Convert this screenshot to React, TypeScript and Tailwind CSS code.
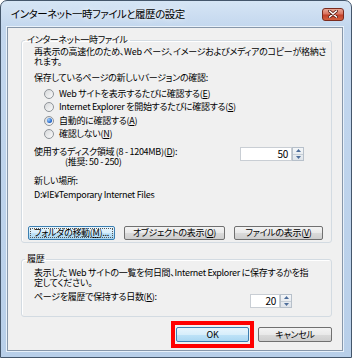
import type { ReactNode } from "react";

const jp = "font-['Noto_Sans_CJK_JP','Noto_Sans',sans-serif] [font-feature-settings:'palt']";

function Radio({ checked, children }: { checked?: boolean; children: ReactNode }) {
  return (
    <div className="flex h-[13.5px] items-center gap-[5px] pl-[22px]">
      <span className="flex h-[10px] w-[10px] items-center justify-center rounded-full border border-[#8f9499] bg-[linear-gradient(135deg,#d6d8da,#fbfbfb)]">
        {checked && (
          <span className="h-[5px] w-[5px] rounded-full bg-[radial-gradient(circle_at_35%_35%,#9fd0ff,#1c5fc6_70%)]" />
        )}
      </span>
      <span className="leading-[10px]">{children}</span>
    </div>
  );
}

function Spinner({ value, width }: { value: string; width: string }) {
  return (
    <div className="flex h-[14px]">
      <div
        className={
          "flex items-center justify-end border border-[#c9ced4] bg-white pr-[3px] text-[10px] leading-[10px] " + width
        }
      >
        {value}
      </div>
      <div className="flex w-[12px] flex-col border border-[#b7c0ca] bg-[linear-gradient(#f4f6f8,#dfe4ea)]">
        <div className="flex flex-1 items-center justify-center border-b border-[#c6ced6]">
          <svg width="5" height="3" viewBox="0 0 5 3">
            <path d="M0 3 L2.5 0 L5 3 Z" fill="#4d6d9a" />
          </svg>
        </div>
        <div className="flex flex-1 items-center justify-center">
          <svg width="5" height="3" viewBox="0 0 5 3">
            <path d="M0 0 L2.5 3 L5 0 Z" fill="#4d6d9a" />
          </svg>
        </div>
      </div>
    </div>
  );
}

function Button({
  children,
  width,
  blue,
  focused,
}: {
  children: ReactNode;
  width: string;
  blue?: boolean;
  focused?: boolean;
}) {
  return (
    <button
      type="button"
      className={
        "relative flex h-[14px] items-center justify-center rounded-[2px] border leading-[10px] text-black " +
        width +
        (blue
          ? " border-[#3c7fb1] bg-[linear-gradient(#e8f5fd_0%,#d7eefb_50%,#bfe3f8_51%,#aad7f2_100%)]"
          : " border-[#707070] bg-[linear-gradient(#f3f3f3_0%,#e9e9e9_50%,#dadada_51%,#cecece_100%)]")
      }
    >
      {focused && <span className="absolute inset-[1px] border border-dotted border-[#555]" />}
      {children}
    </button>
  );
}

export default function App() {
  return (
    <div className={"h-[358px] w-[352px] whitespace-nowrap bg-white text-[9px] tracking-[-0.3px] text-black " + jp}>
      <div className="flex h-full flex-col rounded-t-[7px] border border-[#44566b] bg-[linear-gradient(180deg,#d6e5f5_0px,#c3d7ee_26px,#b8cfe9_100%)]">
        {/* title bar */}
        <div className="flex h-[26px] items-center justify-between pl-[10px] pr-[7px]">
          <span className="text-[10.5px] leading-[12px] tracking-[-0.5px] [text-shadow:0_0_6px_#ffffff]">
            インターネット一時ファイルと履歴の設定
          </span>
          <div className="flex h-[13px] w-[22px] items-center justify-center rounded-[3px] border border-[#7a2a1d] bg-[linear-gradient(#eaa797_0%,#d9735f_45%,#c2402a_55%,#d35f3e_100%)]">
            <svg width="10" height="8" viewBox="0 0 10 8">
              <path d="M1.5 1 L8.5 7 M8.5 1 L1.5 7" stroke="#5a1a10" strokeWidth="3" strokeLinecap="round" />
              <path d="M1.5 1 L8.5 7 M8.5 1 L1.5 7" stroke="#ffffff" strokeWidth="1.6" strokeLinecap="round" />
            </svg>
          </div>
        </div>

        {/* client area */}
        <div className="mb-[6px] ml-[6px] mr-[8px] flex flex-1 flex-col border border-[#8797aa] bg-[#f0f0f0] pl-[13px] pr-[10px] shadow-[0_0_0_1px_#e8f1fa]">
          <fieldset className="mt-[7px] rounded-[3px] border border-[#d3dbe2] pb-[2px] shadow-[inset_1px_1px_0_#ffffff]">
            <legend className="ml-[3px] px-[2px] leading-[10px]">インターネット一時ファイル</legend>
            <p className="mt-[2px] pl-[12px] leading-[10px]">
              再表示の高速化のため、Web ページ、イメージおよびメディアのコピーが格納さ
              <br />
              れます。
            </p>
            <p className="mt-[6px] pl-[12px] leading-[10px]">保存しているページの新しいバージョンの確認:</p>
            <div className="mt-[4px]">
              <Radio>
                Web サイトを表示するたびに確認する(<u>E</u>)
              </Radio>
              <Radio>
                Internet Explorer を開始するたびに確認する(<u>S</u>)
              </Radio>
              <Radio checked>
                自動的に確認する(<u>A</u>)
              </Radio>
              <Radio>
                確認しない(<u>N</u>)
              </Radio>
            </div>
            <div className="mt-[6px] flex items-start justify-between pl-[12px] pr-[27px]">
              <p className="leading-[10px]">
                使用するディスク領域 (8 - 1204MB)(<u>D</u>):
                <br />
                <span className="pl-[31px]">(推奨: 50 - 250)</span>
              </p>
              <Spinner value="50" width="w-[52px]" />
            </div>
            <p className="mt-[9px] pl-[12px] leading-[10px]">新しい場所:</p>
            <p className="mt-[4px] pl-[12px] leading-[10px]">D:¥IE¥Temporary Internet Files</p>
            <div className="mt-[26px] flex gap-[9px] pl-[6px]">
              <Button width="w-[87px]" blue focused>
                フォルダの移動(<u>M</u>)...
              </Button>
              <Button width="w-[101px]">
                オブジェクトの表示(<u>O</u>)
              </Button>
              <Button width="w-[89px]">
                ファイルの表示(<u>V</u>)
              </Button>
            </div>
          </fieldset>

          <fieldset className="mt-[11px] rounded-[3px] border border-[#d3dbe2] pb-[8px] shadow-[inset_1px_1px_0_#ffffff]">
            <legend className="ml-[3px] px-[2px] leading-[10px]">履歴</legend>
            <p className="mt-[4px] pl-[12px] leading-[10px]">
              表示した Web サイトの一覧を何日間、Internet Explorer に保存するかを指
              <br />
              定してください。
            </p>
            <div className="mt-[4px] flex items-start justify-between pl-[12px] pr-[39px]">
              <p className="leading-[10px]">
                ページを履歴で保持する日数(<u>K</u>):
              </p>
              <div className="mt-[2px]">
                <Spinner value="20" width="w-[30px]" />
              </div>
            </div>
          </fieldset>

          <div className="mt-[4px] flex items-center justify-end">
            <div className="border-4 border-[#ff0000] px-[1px] py-[2px]">
              <Button width="w-[73px] h-[15px]" blue>
                OK
              </Button>
            </div>
            <div className="ml-[4px]">
              <Button width="w-[74px] h-[15px]">キャンセル</Button>
            </div>
          </div>
        </div>
      </div>
    </div>
  );
}
